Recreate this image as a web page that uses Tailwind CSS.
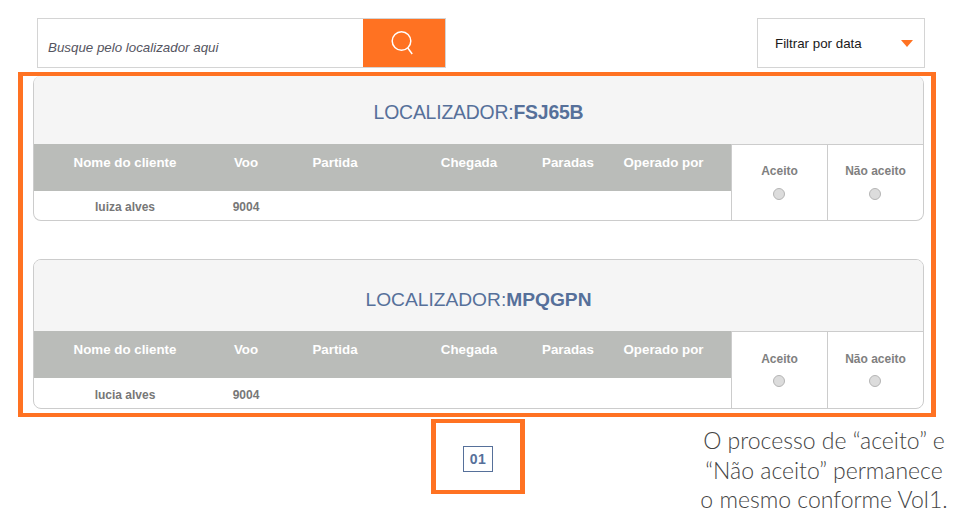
<!DOCTYPE html>
<html lang="en">
<head>
    <meta charset="UTF-8">
    <title>Localizador</title>
    <script src="https://cdn.jsdelivr.net/npm/@tailwindcss/browser@4"></script>
</head>
<body class="bg-white font-['Liberation_Sans',Arial,sans-serif] overflow-hidden">
    <div class="w-[974px] h-[514px] pt-[18px]">
        <!-- search + filter -->
        <div class="flex pl-[37px] h-[50px]">
            <div class="flex w-[409px] border border-[#d4d4d4]">
                <div class="flex-1 pl-[10px] pt-[21px] text-[13.33px] leading-[16px] italic text-[#55555f]">Busque pelo localizador aqui</div>
                <div class="w-[82px] bg-[#ff7222] flex items-center justify-center">
                    <svg width="26" height="26" viewBox="0 0 26 26" fill="none" stroke="#fff" stroke-width="1.5" class="ml-[-3px]">
                        <circle cx="11.5" cy="11" r="9.3"/>
                        <path d="M17.8 18l4.4 6"/>
                    </svg>
                </div>
            </div>
            <div class="ml-[311px] w-[168px] border border-[#d4d4d4] flex items-center pl-[17px] pr-[11px] justify-between">
                <span class="text-[13.33px] text-[#1a1a1a] mt-[1px]">Filtrar por data</span>
                <span class="w-0 h-0 border-x-[6.5px] border-x-transparent border-t-[7px] border-t-[#ff7222]"></span>
            </div>
        </div>

        <!-- orange frame round the results -->
        <div class="mt-[4px] ml-[18px] w-[918px] h-[345px] border-x-[5px] border-y-[4px] border-[#ff7222] pl-[10px] pr-[7px]">
            <div class="h-[145px] border border-t-0 border-[#cccccc] rounded-[8px] overflow-hidden flex flex-col">
                <div class="h-[68px] shrink-0 bg-[#f5f5f5] flex items-center justify-center pt-[5px] text-[19.4px] text-[#56709a] tracking-[-0.2px]">
                    <span>LOCALIZADOR:</span><b>FSJ65B</b>
                </div>
                <div class="flex flex-1 min-h-0">
                    <div class="w-[697px] flex flex-col">
                        <div class="h-[47px] bg-[#babcb9] grid grid-cols-[186px_52px_126px_142px_56px_1fr] text-center text-[13.33px] font-bold text-white pt-[9px]">
                            <span class="pr-1">Nome do cliente</span><span>Voo</span><span>Partida</span><span>Chegada</span><span>Paradas</span><span>Operado por</span>
                        </div>
                        <div class="flex-1 grid grid-cols-[186px_52px_126px_142px_56px_1fr] text-center text-[12px] font-bold text-[#777777] pt-[7px]">
                            <span class="pr-1">luiza alves</span><span>9004</span>
                        </div>
                    </div>
                    <div class="w-[97px] border-x border-t border-[#cccccc] flex flex-col items-center pt-[17px] text-[12px] font-bold text-[#808080]">
                        <span>Aceito</span>
                        <span class="mt-[8px] size-[12px] rounded-full border border-[#b5b5b5] bg-[#dcdcdc] mr-[2px]"></span>
                    </div>
                    <div class="flex-1 border-t border-[#cccccc] flex flex-col items-center pt-[17px] text-[12px] font-bold text-[#808080]">
                        <span>Não aceito</span>
                        <span class="mt-[8px] size-[12px] rounded-full border border-[#b5b5b5] bg-[#dcdcdc] mr-[2px]"></span>
                    </div>
                </div>
            </div>

            <div class="mt-[38px] h-[150px] border border-[#cccccc] rounded-[8px] overflow-hidden flex flex-col">
                <div class="h-[71px] shrink-0 bg-[#f5f5f5] flex items-center justify-center pt-[10px] text-[19.2px] text-[#56709a]">
                    <span>LOCALIZADOR:</span><b>MPQGPN</b>
                </div>
                <div class="flex flex-1 min-h-0">
                    <div class="w-[697px] flex flex-col">
                        <div class="h-[47px] bg-[#babcb9] grid grid-cols-[186px_52px_126px_142px_56px_1fr] text-center text-[13.33px] font-bold text-white pt-[9px]">
                            <span class="pr-1">Nome do cliente</span><span>Voo</span><span>Partida</span><span>Chegada</span><span>Paradas</span><span>Operado por</span>
                        </div>
                        <div class="flex-1 grid grid-cols-[186px_52px_126px_142px_56px_1fr] text-center text-[12px] font-bold text-[#777777] pt-[8px]">
                            <span class="pr-1">lucia alves</span><span>9004</span>
                        </div>
                    </div>
                    <div class="w-[97px] border-x border-t border-[#cccccc] flex flex-col items-center pt-[18px] text-[12px] font-bold text-[#808080]">
                        <span>Aceito</span>
                        <span class="mt-[7px] size-[12px] rounded-full border border-[#b5b5b5] bg-[#dcdcdc] mr-[2px]"></span>
                    </div>
                    <div class="flex-1 border-t border-[#cccccc] flex flex-col items-center pt-[18px] text-[12px] font-bold text-[#808080]">
                        <span>Não aceito</span>
                        <span class="mt-[7px] size-[12px] rounded-full border border-[#b5b5b5] bg-[#dcdcdc] mr-[2px]"></span>
                    </div>
                </div>
            </div>
        </div>

        <!-- pagination + note -->
        <div class="flex mt-[2px]">
            <div class="ml-[431px] w-[94px] h-[75px] border-x-[5px] border-y-[4px] border-[#ff7222] flex items-center justify-center">
                <span class="w-[30px] h-[26px] border border-[#56709a] flex items-center justify-center text-[14px] font-bold text-[#56709a] tracking-[0.5px] mt-[5px]">01</span>
            </div>
            <div class="ml-[169px] w-[260px] pt-[7px] text-center font-['Lato',sans-serif] font-light text-[23px] leading-[29.5px] text-[#444444] whitespace-nowrap">
                O processo de “aceito” e<br>“Não aceito” permanece<br>o mesmo conforme Vol1.
            </div>
        </div>
    </div>
</body>
</html>
